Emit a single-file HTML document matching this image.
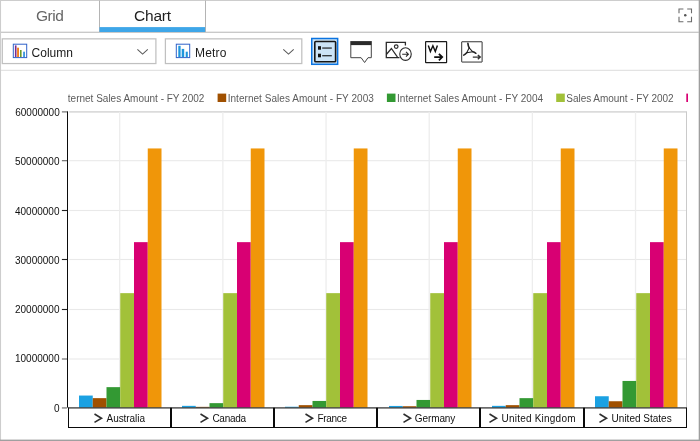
<!DOCTYPE html>
<html><head><meta charset="utf-8"><title>Chart</title>
<style>
html,body{margin:0;padding:0;background:#fff;}
body{will-change:transform;width:700px;height:441px;position:relative;overflow:hidden;font-family:"Liberation Sans",sans-serif;}
.a{position:absolute;}
.t{position:absolute;white-space:nowrap;line-height:1;}
</style></head><body>

<svg class="a" style="left:0;top:0" width="700" height="441" viewBox="0 0 700 441">
<rect x="0" y="0" width="700" height="1" fill="#cdcdcd"/>
<rect x="0" y="0" width="1.05" height="441" fill="#cdcdcd"/>
<rect x="698.7" y="0" width="1.3" height="441" fill="#9e9e9e"/>
<rect x="0" y="439.6" width="700" height="1.4" fill="#a0a0a0"/>
<rect x="1" y="31.7" width="698" height="1.1" fill="#bcbcbc"/>
<rect x="99" y="0.5" width="1" height="31.5" fill="#b4b4b4"/>
<rect x="205" y="0.5" width="1" height="31.5" fill="#b4b4b4"/>
<rect x="99.5" y="27.1" width="105.6" height="4.9" fill="#3ea6e8"/>
<rect x="1" y="69.8" width="698" height="1" fill="#dcdcdc"/>
<rect x="2.3" y="38.85" width="153.6" height="24.7" fill="#fff" stroke="#c0c0c0" stroke-width="1.25"/>
<rect x="165.4" y="38.85" width="136.4" height="24.7" fill="#fff" stroke="#c0c0c0" stroke-width="1.25"/>
<path d="M137.4 49.3L142.6 54.1L147.8 49.3" fill="none" stroke="#5a5a5a" stroke-width="1.05"/>
<path d="M283.3 49.3L288.5 54.1L293.7 49.3" fill="none" stroke="#5a5a5a" stroke-width="1.05"/>
</svg>
<div class="t" style="top:8px;transform:translateY(0.30px) rotate(0.001deg);left:35.6px;font-size:15.5px;letter-spacing:-0.45px;color:#666">Grid</div>
<div class="t" style="top:8px;transform:translateY(0.30px) rotate(0.001deg);left:133.7px;font-size:15.5px;letter-spacing:-0.2px;color:#1e1e1e">Chart</div>
<svg class="a" style="left:676px;top:6px" width="20" height="20" viewBox="0 0 20 20"><g fill="none" stroke="#6a6a6a" stroke-width="1.1"><path d="M3 7.3V3H7.4M11.2 3H15.5V7.3M15.5 10.8V15.8H11.2M7.4 15.8H3V10.8"/></g><circle cx="9.25" cy="9.15" r="1.25" fill="#555"/></svg>
<svg class="a" style="left:12px;top:43px" width="16" height="16" viewBox="0 0 16 16"><rect x="1.3" y="1.2" width="13.4" height="13.4" fill="#fff" stroke="#2f62c9" stroke-width="1"/><rect x="2.9" y="2.4" width="1.6" height="11.6" fill="#7a2a8c"/><rect x="5.1" y="4.7" width="1.9" height="9.3" fill="#f07f1c"/><rect x="8" y="7" width="1.6" height="7" fill="#6a9a2a"/><rect x="11.2" y="8.7" width="1.7" height="5.3" fill="#2b8fd9"/></svg>
<div class="t" style="left:31.6px;top:47px;font-size:12px;color:#1a1a1a">Column</div>
<svg class="a" style="left:175px;top:43px" width="16" height="16" viewBox="0 0 16 16"><rect x="1.3" y="1.2" width="13.4" height="13.4" fill="#fff" stroke="#2f62c9" stroke-width="1"/><rect x="3.3" y="2.8" width="2.3" height="11.2" fill="#1e96dc"/><rect x="6.7" y="5.9" width="2.5" height="8.1" fill="#1e96dc"/><rect x="10.7" y="8.7" width="2.1" height="5.3" fill="#1e96dc"/></svg>
<div class="t" style="left:195.1px;top:47px;font-size:12px;color:#1a1a1a"><span style="letter-spacing:0.15px">Metro</span></div>
<svg class="a" style="left:309px;top:36px" width="32" height="32" viewBox="0 0 32 32"><rect x="2.75" y="2.5" width="25.9" height="25.8" fill="#cce4f7" stroke="#0b73e0" stroke-width="1.5"/><rect x="5.8" y="5.5" width="20.8" height="20.3" rx="0.9" fill="none" stroke="#161616" stroke-width="1.6"/><rect x="9" y="10.2" width="3" height="3.5" fill="#111"/><rect x="13.2" y="11.5" width="9.6" height="1.1" fill="#111"/><rect x="9" y="17.7" width="3" height="3.6" fill="#111"/><rect x="13.2" y="19.2" width="9.6" height="1.1" fill="#111"/></svg>
<svg class="a" style="left:348px;top:38px" width="28" height="28" viewBox="0 0 28 28"><rect x="2.3" y="3.1" width="21.5" height="4" fill="#2a2a2a"/><path d="M2.8 7V19.7H13.1L16.6 24.5L20 19.7H23.3V7" fill="none" stroke="#444" stroke-width="1"/></svg>
<svg class="a" style="left:382px;top:38px" width="32" height="28" viewBox="0 0 32 28"><path d="M23.4 7.5V4.3H4.3V19.7H17.5" fill="none" stroke="#2a2a2a" stroke-width="1.3"/><path d="M4.3 16.5L9.4 10.5L15.5 19.2" fill="none" stroke="#2a2a2a" stroke-width="1.2"/><circle cx="14.2" cy="8.6" r="1.8" fill="none" stroke="#2a2a2a" stroke-width="1.2"/><ellipse cx="23.5" cy="16.1" rx="5.75" ry="6.3" fill="#fff" stroke="#2a2a2a" stroke-width="1.1"/><path d="M20.2 16.2H26.3M24 13.8L26.4 16.2L24 18.6" fill="none" stroke="#2a2a2a" stroke-width="1.1"/></svg>
<svg class="a" style="left:422px;top:38px" width="28" height="28" viewBox="0 0 28 28"><rect x="3.6" y="3.6" width="21" height="21" rx="0.4" fill="none" stroke="#1a1a1a" stroke-width="1.2"/><path d="M6.3 7.6L8.4 13.5L10.9 7.8L13.3 13.5L15.4 7.6" fill="none" stroke="#111" stroke-width="1.45" stroke-linejoin="miter"/><path d="M12.2 19.1H20M16.9 15.9L20.2 19.1L16.9 22.4" fill="none" stroke="#111" stroke-width="1.8"/></svg>
<svg class="a" style="left:458px;top:38px" width="28" height="28" viewBox="0 0 28 28"><rect x="3.7" y="3.75" width="20.4" height="20.3" rx="0.2" fill="none" stroke="#333" stroke-width="1.0"/><path d="M9.9 5.3C10.1 7.4 10.5 8.7 11.2 9.8" fill="none" stroke="#222" stroke-width="1.6" stroke-linecap="round"/><path d="M11.2 9.8L8.7 14.7L14.8 13.8Z" fill="none" stroke="#222" stroke-width="1.05" stroke-linejoin="round"/><path d="M8.7 14.7C7.8 15.7 6.8 16.5 5.7 17.1" fill="none" stroke="#222" stroke-width="1.5" stroke-linecap="round"/><path d="M14.8 13.8C15.9 14.1 17 14.7 17.9 15.3" fill="none" stroke="#222" stroke-width="1.5" stroke-linecap="round"/><path d="M14.8 19.1H21.6M19.8 16.9L22.3 19.1L19.8 21.3" fill="none" stroke="#333" stroke-width="1.35"/></svg>
<svg class="a" style="left:0;top:0" width="700" height="441" viewBox="0 0 700 441">
<rect x="69.20" y="358.45" width="617.30" height="1.10" fill="#e9e9e9"/>
<rect x="69.20" y="308.95" width="617.30" height="1.10" fill="#e9e9e9"/>
<rect x="69.20" y="258.95" width="617.30" height="1.10" fill="#e9e9e9"/>
<rect x="69.20" y="209.95" width="617.30" height="1.10" fill="#e9e9e9"/>
<rect x="69.20" y="160.15" width="617.30" height="1.10" fill="#e9e9e9"/>
<rect x="69.20" y="111.20" width="617.30" height="1.40" fill="#d3d3d3"/>
<rect x="119.05" y="111.90" width="1.30" height="295.85" fill="#ededed"/>
<rect x="222.22" y="111.90" width="1.30" height="295.85" fill="#ededed"/>
<rect x="325.39" y="111.90" width="1.30" height="295.85" fill="#ededed"/>
<rect x="428.56" y="111.90" width="1.30" height="295.85" fill="#ededed"/>
<rect x="531.73" y="111.90" width="1.30" height="295.85" fill="#ededed"/>
<rect x="634.90" y="111.90" width="1.30" height="295.85" fill="#ededed"/>
<rect x="686.00" y="111.40" width="1.00" height="295.85" fill="#cacaca"/>
<rect x="79.00" y="395.55" width="13.75" height="12.20" fill="#1BA1E2"/>
<rect x="92.75" y="398.15" width="13.75" height="9.60" fill="#A05000"/>
<rect x="106.50" y="387.15" width="13.75" height="20.60" fill="#339933"/>
<rect x="120.25" y="293.15" width="13.75" height="114.60" fill="#A2C139"/>
<rect x="134.00" y="242.15" width="13.75" height="165.60" fill="#D80073"/>
<rect x="147.75" y="148.45" width="13.75" height="259.30" fill="#F09609"/>
<rect x="182.00" y="405.85" width="13.75" height="1.90" fill="#1BA1E2"/>
<rect x="195.75" y="406.85" width="13.75" height="0.90" fill="#A05000"/>
<rect x="209.50" y="403.15" width="13.75" height="4.60" fill="#339933"/>
<rect x="223.25" y="293.15" width="13.75" height="114.60" fill="#A2C139"/>
<rect x="237.00" y="242.15" width="13.75" height="165.60" fill="#D80073"/>
<rect x="250.75" y="148.45" width="13.75" height="259.30" fill="#F09609"/>
<rect x="285.00" y="406.75" width="13.75" height="1.00" fill="#1BA1E2"/>
<rect x="298.75" y="405.15" width="13.75" height="2.60" fill="#A05000"/>
<rect x="312.50" y="400.95" width="13.75" height="6.80" fill="#339933"/>
<rect x="326.25" y="293.15" width="13.75" height="114.60" fill="#A2C139"/>
<rect x="340.00" y="242.15" width="13.75" height="165.60" fill="#D80073"/>
<rect x="353.75" y="148.45" width="13.75" height="259.30" fill="#F09609"/>
<rect x="389.00" y="405.95" width="13.75" height="1.80" fill="#1BA1E2"/>
<rect x="402.75" y="406.25" width="13.75" height="1.50" fill="#A05000"/>
<rect x="416.50" y="399.95" width="13.75" height="7.80" fill="#339933"/>
<rect x="430.25" y="293.15" width="13.75" height="114.60" fill="#A2C139"/>
<rect x="444.00" y="242.15" width="13.75" height="165.60" fill="#D80073"/>
<rect x="457.75" y="148.45" width="13.75" height="259.30" fill="#F09609"/>
<rect x="492.00" y="405.85" width="13.75" height="1.90" fill="#1BA1E2"/>
<rect x="505.75" y="405.15" width="13.75" height="2.60" fill="#A05000"/>
<rect x="519.50" y="398.15" width="13.75" height="9.60" fill="#339933"/>
<rect x="533.25" y="293.15" width="13.75" height="114.60" fill="#A2C139"/>
<rect x="547.00" y="242.15" width="13.75" height="165.60" fill="#D80073"/>
<rect x="560.75" y="148.45" width="13.75" height="259.30" fill="#F09609"/>
<rect x="595.00" y="396.25" width="13.75" height="11.50" fill="#1BA1E2"/>
<rect x="608.75" y="401.25" width="13.75" height="6.50" fill="#A05000"/>
<rect x="622.50" y="380.95" width="13.75" height="26.80" fill="#339933"/>
<rect x="636.25" y="293.15" width="13.75" height="114.60" fill="#A2C139"/>
<rect x="650.00" y="242.15" width="13.75" height="165.60" fill="#D80073"/>
<rect x="663.75" y="148.45" width="13.75" height="259.30" fill="#F09609"/>
<rect x="67.00" y="111.30" width="1.00" height="296.30" fill="#0c0c0c"/>
<rect x="68.00" y="407.25" width="619.00" height="1.30" fill="#3a3a3a"/>
<rect x="61.90" y="407.40" width="5.10" height="1.10" fill="#666"/>
<rect x="61.90" y="358.45" width="5.10" height="1.10" fill="#666"/>
<rect x="61.90" y="308.95" width="5.10" height="1.10" fill="#222"/>
<rect x="61.90" y="258.95" width="5.10" height="1.10" fill="#222"/>
<rect x="61.90" y="209.95" width="5.10" height="1.10" fill="#222"/>
<rect x="61.90" y="160.15" width="5.10" height="1.10" fill="#666"/>
<rect x="61.90" y="111.35" width="5.10" height="1.10" fill="#666"/>
<rect x="68.00" y="407.75" width="1.00" height="19.75" fill="#0a0a0a"/>
<rect x="170.00" y="407.75" width="1.00" height="19.75" fill="#0a0a0a"/>
<rect x="171.00" y="407.75" width="1.00" height="19.75" fill="#0a0a0a"/>
<rect x="273.00" y="407.75" width="1.00" height="19.75" fill="#0a0a0a"/>
<rect x="274.00" y="407.75" width="1.00" height="19.75" fill="#0a0a0a"/>
<rect x="376.00" y="407.75" width="1.00" height="19.75" fill="#0a0a0a"/>
<rect x="377.00" y="407.75" width="1.00" height="19.75" fill="#0a0a0a"/>
<rect x="479.00" y="407.75" width="1.00" height="19.75" fill="#0a0a0a"/>
<rect x="480.00" y="407.75" width="1.00" height="19.75" fill="#0a0a0a"/>
<rect x="583.00" y="407.75" width="1.00" height="19.75" fill="#0a0a0a"/>
<rect x="584.00" y="407.75" width="1.00" height="19.75" fill="#0a0a0a"/>
<rect x="686.00" y="407.75" width="1.00" height="19.75" fill="#0a0a0a"/>
<rect x="68.00" y="427.00" width="619.00" height="1.00" fill="#0a0a0a"/>
</svg>
<div class="t" style="top:403px;transform:translateY(0.70px) rotate(0.001deg);right:640.3px;font-size:10px;color:#111">0</div>
<div class="t" style="top:354px;transform:translateY(0.42px) rotate(0.001deg);right:640.3px;font-size:10px;color:#111">10000000</div>
<div class="t" style="top:305px;transform:translateY(0.14px) rotate(0.001deg);right:640.3px;font-size:10px;color:#111">20000000</div>
<div class="t" style="top:255px;transform:translateY(0.86px) rotate(0.001deg);right:640.3px;font-size:10px;color:#111">30000000</div>
<div class="t" style="top:206px;transform:translateY(0.58px) rotate(0.001deg);right:640.3px;font-size:10px;color:#111">40000000</div>
<div class="t" style="top:157px;transform:translateY(0.30px) rotate(0.001deg);right:640.3px;font-size:10px;color:#111">50000000</div>
<div class="t" style="top:108px;right:640.3px;font-size:10px;color:#111">60000000</div>
<svg class="a" style="left:93.4px;top:412px" width="12" height="12" viewBox="0 0 12 12"><path d="M1.5 2.0L8.5 6.2L1.5 10.4" fill="none" stroke="#2e2e2e" stroke-width="1.6"/></svg>
<div class="t" style="left:106.6px;top:414px;font-size:10px;letter-spacing:-0.07px;color:#111">Australia</div>
<svg class="a" style="left:199.0px;top:412px" width="12" height="12" viewBox="0 0 12 12"><path d="M1.5 2.0L8.5 6.2L1.5 10.4" fill="none" stroke="#2e2e2e" stroke-width="1.6"/></svg>
<div class="t" style="left:212.4px;top:414px;font-size:10px;letter-spacing:-0.27px;color:#111">Canada</div>
<svg class="a" style="left:303.9px;top:412px" width="12" height="12" viewBox="0 0 12 12"><path d="M1.5 2.0L8.5 6.2L1.5 10.4" fill="none" stroke="#2e2e2e" stroke-width="1.6"/></svg>
<div class="t" style="left:317.6px;top:414px;font-size:10px;letter-spacing:-0.33px;color:#111">France</div>
<svg class="a" style="left:401.6px;top:412px" width="12" height="12" viewBox="0 0 12 12"><path d="M1.5 2.0L8.5 6.2L1.5 10.4" fill="none" stroke="#2e2e2e" stroke-width="1.6"/></svg>
<div class="t" style="left:414.8px;top:414px;font-size:10px;letter-spacing:-0.1px;color:#111">Germany</div>
<svg class="a" style="left:488.0px;top:412px" width="12" height="12" viewBox="0 0 12 12"><path d="M1.5 2.0L8.5 6.2L1.5 10.4" fill="none" stroke="#2e2e2e" stroke-width="1.6"/></svg>
<div class="t" style="left:501.5px;top:414px;font-size:10px;letter-spacing:0.22px;color:#111">United Kingdom</div>
<svg class="a" style="left:598.2px;top:412px" width="12" height="12" viewBox="0 0 12 12"><path d="M1.5 2.0L8.5 6.2L1.5 10.4" fill="none" stroke="#2e2e2e" stroke-width="1.6"/></svg>
<div class="t" style="left:611.6px;top:414px;font-size:10px;letter-spacing:0.0px;color:#111">United States</div>
<div class="a" style="left:67.5px;top:88px;width:620.4px;height:20px;overflow:hidden">
<svg class="a" style="left:0;top:0" width="621" height="20" viewBox="0 0 621 20">
<rect x="-19.70" y="5.6" width="8.6" height="8.4" fill="#1BA1E2"/>
<rect x="149.60" y="5.6" width="8.6" height="8.4" fill="#A05000"/>
<rect x="318.90" y="5.6" width="8.6" height="8.4" fill="#339933"/>
<rect x="488.20" y="5.6" width="8.6" height="8.4" fill="#A2C139"/>
<rect x="618.30" y="5.6" width="8.6" height="8.4" fill="#D80073"/>
</svg>
<div class="t" style="left:0.3px;top:6px;font-size:10px;letter-spacing:0.0px;color:#5c5c5c">ternet Sales Amount - FY 2002</div>
<div class="t" style="left:160.2px;top:6px;font-size:10px;letter-spacing:0.04px;color:#5c5c5c">Internet Sales Amount - FY 2003</div>
<div class="t" style="left:329.5px;top:6px;font-size:10px;letter-spacing:0.04px;color:#5c5c5c">Internet Sales Amount - FY 2004</div>
<div class="t" style="left:498.8px;top:6px;font-size:10px;letter-spacing:-0.04px;color:#5c5c5c">Sales Amount - FY 2002</div>
<div class="t" style="left:628.9px;top:6px;font-size:10px;letter-spacing:0px;color:#5c5c5c">Sales Amount - FY 2003</div>
</div>
</body></html>
